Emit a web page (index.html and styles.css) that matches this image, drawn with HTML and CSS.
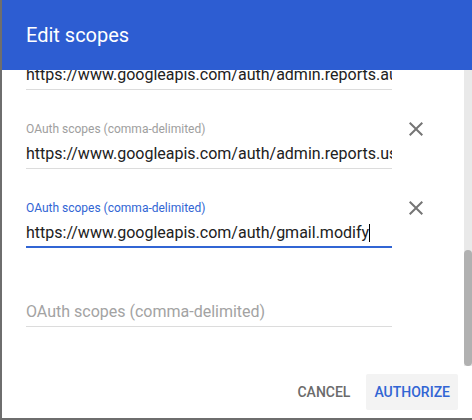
FILE: index.html
```html
<!DOCTYPE html>
<html>
<head>
<meta charset="utf-8">
<link rel="stylesheet" href="styles.css">
</head>
<body>
<div class="dialog">
  <div class="header"><span class="title">Edit scopes</span></div>
  <div class="body">
    <div class="scroll">
      <div class="fields">
        <div class="field">
          <div class="col"><div class="label">OAuth scopes (comma-delimited)</div><div class="value">https://www.googleapis.com/auth/admin.reports.audit.readonly</div></div>
          <svg class="close" viewBox="0 0 24 24"><path d="M19 6.41L17.59 5 12 10.59 6.41 5 5 6.41 10.59 12 5 17.59 6.41 19 12 13.41 17.59 19 19 17.59 13.41 12z"/></svg>
        </div>
        <div class="field">
          <div class="col"><div class="label">OAuth scopes (comma-delimited)</div><div class="value">https://www.googleapis.com/auth/admin.reports.usage.readonly</div></div>
          <svg class="close" viewBox="0 0 24 24"><path d="M19 6.41L17.59 5 12 10.59 6.41 5 5 6.41 10.59 12 5 17.59 6.41 19 12 13.41 17.59 19 19 17.59 13.41 12z"/></svg>
        </div>
        <div class="field focused">
          <div class="col"><div class="label">OAuth scopes (comma-delimited)</div><div class="value">https://www.googleapis.com/auth/gmail.modify<span class="caret"></span></div></div>
          <svg class="close" viewBox="0 0 24 24"><path d="M19 6.41L17.59 5 12 10.59 6.41 5 5 6.41 10.59 12 5 17.59 6.41 19 12 13.41 17.59 19 19 17.59 13.41 12z"/></svg>
        </div>
        <div class="field empty">
          <div class="col"><div class="label"></div><div class="value placeholder">OAuth scopes (comma-delimited)</div></div>
        </div>
      </div>
    </div>
    <div class="track"><div class="thumb"></div></div>
  </div>
  <div class="footer">
    <button class="btn cancel">Cancel</button>
    <button class="btn primary">Authorize</button>
  </div>
</div>
</body>
</html>
```

FILE: styles.css
```css
html, body {
  margin: 0;
  padding: 0;
}
body {
  background: #6e6e6e;
  height: 420px;
  overflow: hidden;
  font-family: Roboto, "Liberation Sans", Arial, sans-serif;
}
.dialog {
  margin-left: 2px;
  width: 470px;
  height: 418px;
  background: #fff;
  display: flex;
  flex-direction: column;
  overflow: hidden;
}
.header {
  height: 70px;
  flex: none;
  background: #2d5dd2;
  display: flex;
  align-items: center;
  padding-left: 24px;
  padding-bottom: 1px;
  box-sizing: border-box;
}
.title {
  color: #fff;
  font-size: 20px;
  font-weight: 400;
}
.body {
  height: 296px;
  flex: none;
  display: flex;
}
.scroll {
  flex: 1;
  overflow: hidden;
  display: flex;
  flex-direction: column;
  justify-content: flex-end;
}
.track {
  width: 8px;
  flex: none;
  background: #e9e9e9;
  display: flex;
  flex-direction: column;
  justify-content: flex-end;
}
.thumb {
  height: 116px;
  background: #b1b1b1;
  border-radius: 4px;
}
.fields {
  flex: none;
  padding: 0 0 39px 24px;
}
.field {
  display: flex;
  gap: 12px;
  margin-bottom: 30px;
}
.field:last-child {
  margin-bottom: 0;
}
.col {
  width: 366px;
  flex: none;
}
.label {
  height: 18px;
  line-height: 18px;
  font-size: 12px;
  color: #9e9e9e;
}
.value {
  margin-top: 4px;
  height: 24px;
  line-height: 24px;
  font-size: 16px;
  color: #212121;
  white-space: nowrap;
  overflow: hidden;
  padding-bottom: 2px;
  border-bottom: 1px solid #dcdcdc;
}
.focused .label {
  color: #3165d4;
}
.focused .value {
  border-bottom: 2px solid #3165d4;
  padding-bottom: 1px;
}
.placeholder {
  color: #a3a3a3;
}
.caret {
  display: inline-block;
  width: 1px;
  height: 18px;
  background: #000;
  vertical-align: -4px;
}
.close {
  width: 24px;
  height: 24px;
  flex: none;
  margin-top: -3px;
  fill: #757575;
}
.footer {
  flex: none;
  display: flex;
  justify-content: flex-end;
  gap: 8px;
  padding: 8px 14px 8px 0;
}
.btn {
  height: 36px;
  padding: 0 8px;
  border: none;
  border-radius: 2px;
  background: transparent;
  font-family: Roboto, "Liberation Sans", Arial, sans-serif;
  font-size: 14px;
  font-weight: 500;
  text-transform: uppercase;
  cursor: pointer;
}
.cancel {
  color: #6b6b6b;
}
.primary {
  color: #3165d4;
  background: #f3f3f3;
}
```
